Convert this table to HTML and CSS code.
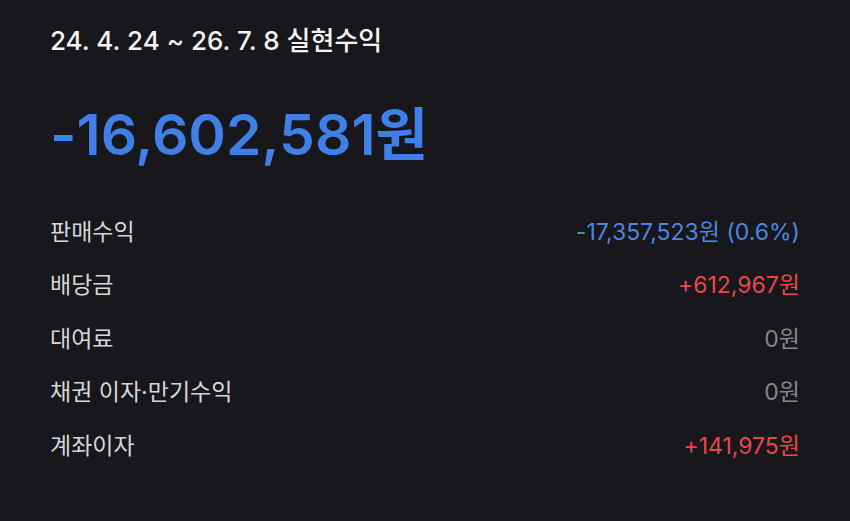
FILE: index.html
```html
<!DOCTYPE html>
<html lang="ko">
<head>
<meta charset="utf-8">
<link rel="stylesheet" href="styles.css">
</head>
<body>
<main class="page">
  <h1 class="period">24. 4. 24 ~ 26. 7. 8 실현수익</h1>
  <div class="total">-16,602,581원</div>
  <ul class="rows">
    <li class="row"><span class="label">판매수익</span><span class="value blue">-17,357,523원 (0.6%)</span></li>
    <li class="row"><span class="label">배당금</span><span class="value red">+612,967원</span></li>
    <li class="row"><span class="label">대여료</span><span class="value gray">0원</span></li>
    <li class="row"><span class="label">채권 이자·만기수익</span><span class="value gray">0원</span></li>
    <li class="row"><span class="label">계좌이자</span><span class="value red">+141,975원</span></li>
  </ul>
</main>
</body>
</html>
```

FILE: styles.css
```css
html, body {
  margin: 0;
  padding: 0;
  background: #17171c;
}
body {
  font-family: Inter, "Noto Sans CJK KR", sans-serif;
  color: #f2f2f4;
  width: 850px;
  height: 521px;
  overflow: hidden;
}
.page {
  padding: 22px 50px 0 50px;
}
.period {
  margin: 0;
  font-size: 26px;
  font-weight: 500;
  line-height: 38px;
  letter-spacing: 0;
  color: #f4f4f6;
}
.total {
  margin-top: 40px;
  font-size: 57px;
  font-weight: 600;
  line-height: 70px;
  letter-spacing: 0;
  color: #3f7fe6;
}
.rows {
  list-style: none;
  margin: 33px 0 0 0;
  padding: 0;
  display: flex;
  flex-direction: column;
}
.row {
  display: flex;
  justify-content: space-between;
  align-items: center;
  height: 53.5px;
  font-size: 23px;
}
.label {
  color: #d6d6da;
}
.value {
  letter-spacing: 0;
}
.blue { color: #4a86e2; }
.red { color: #e8474e; }
.gray { color: #85858b; }
```
